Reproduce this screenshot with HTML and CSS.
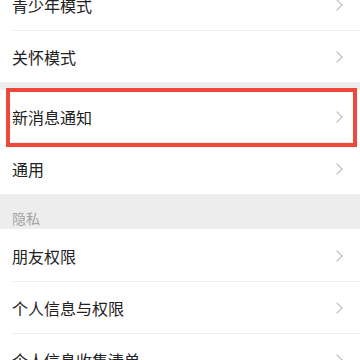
FILE: index.html
```html
<!DOCTYPE html>
<html lang="zh-CN">
<head>
<meta charset="utf-8">
<title>设置</title>
<link rel="stylesheet" href="styles.css">
</head>
<body>
<div class="page">
  <div class="group">
    <div class="row"><span class="label">青少年模式</span><span class="chev"></span></div>
    <div class="row"><span class="label">关怀模式</span><span class="chev"></span></div>
  </div>
  <div class="group">
    <div class="row highlighted"><span class="label">新消息通知</span><span class="chev"></span><span class="mark"></span></div>
    <div class="row"><span class="label">通用</span><span class="chev"></span></div>
  </div>
  <div class="section-title">隐私</div>
  <div class="group">
    <div class="row"><span class="label">朋友权限</span><span class="chev"></span></div>
    <div class="row"><span class="label">个人信息与权限</span><span class="chev"></span></div>
    <div class="row"><span class="label">个人信息收集清单</span><span class="chev"></span></div>
  </div>
</div>
</body>
</html>
```
FILE: styles.css
```css
html, body {
  margin: 0;
  padding: 0;
  background: #ededed;
  overflow: hidden;
}
body {
  width: 360px;
  height: 360px;
  font-family: "Noto Sans CJK SC", "Noto Sans", sans-serif;
}
.page {
  margin-top: -22px;
  display: flex;
  flex-direction: column;
}
.group {
  background: #fff;
  display: flex;
  flex-direction: column;
}
.group + .group {
  margin-top: 8px;
}
.row {
  position: relative;
  height: 52px;
  box-sizing: border-box;
  display: flex;
  align-items: center;
  justify-content: space-between;
  padding: 1px 17px 0 12px;
}
.row + .row::before {
  content: "";
  position: absolute;
  top: 0;
  left: 12px;
  right: 0;
  height: 1px;
  background: #efefef;
}
.label {
  font-size: 16px;
  color: #222;
  line-height: 22px;
}
.chev {
  width: 7px;
  height: 7px;
  border-top: 1.5px solid #b5b5b5;
  border-right: 1.5px solid #b5b5b5;
  transform: rotate(45deg);
  margin-right: 2px;
}
.mark {
  position: absolute;
  top: -2px;
  bottom: -5px;
  left: 6px;
  right: 3px;
  border: 4px solid #f0473b;
  pointer-events: none;
  z-index: 2;
}
.section-title {
  height: 35px;
  box-sizing: border-box;
  padding: 12px 0 0 12px;
  display: flex;
  align-items: center;
  font-size: 14px;
  color: #a3a3a3;
}
```
